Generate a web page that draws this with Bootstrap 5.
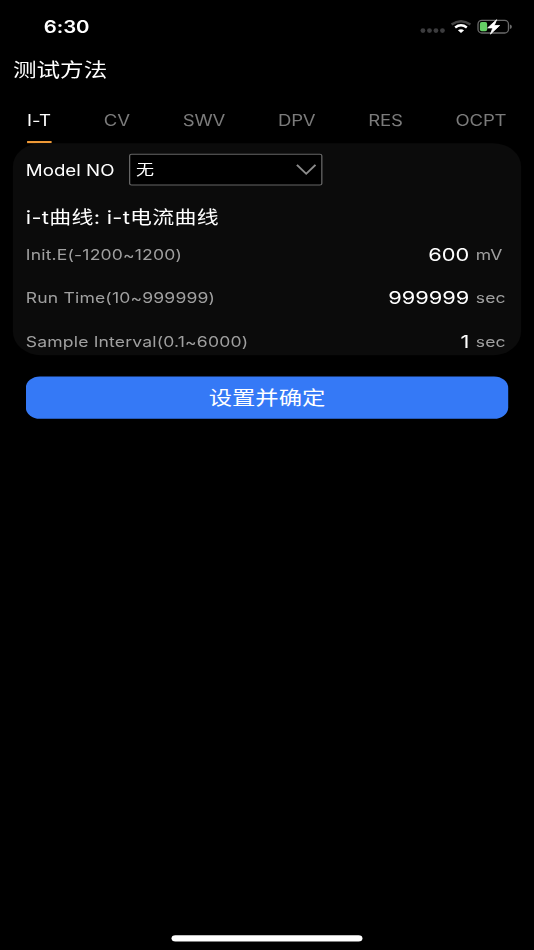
<!DOCTYPE html>
<html lang="zh-CN">
<head>
<meta charset="utf-8">
<meta name="viewport" content="width=device-width, initial-scale=1">
<title>测试方法</title>
<link href="https://cdn.jsdelivr.net/npm/bootstrap@5.3.0/dist/css/bootstrap.min.css" rel="stylesheet">
<style>
html,body{background:#000;overflow:hidden}
body{width:534px;height:950px;font-family:Inter,"Noto Sans CJK SC",sans-serif;line-height:1;color:#fff}
/* 414x896 phone canvas stretched to fill the window */
.screen{width:414px;height:896px;transform:scale(1.28986,1.06027);transform-origin:0 0}
.status{height:50px;padding:0 17px 0 34px}
.clock{font-size:15.8px;letter-spacing:-.1px;padding-top:1px}
.title{height:34px;padding-left:10px;font-size:18.3px;font-weight:400}
.tabs{height:51px;padding:0 21.4px 0 21px;font-size:14.4px}
.tabs .nav-link{padding:2px 0 0;height:41px;color:#7b7b7b;border-bottom:2.4px solid transparent;display:flex;align-items:center;border-radius:0;letter-spacing:-.14px}
.tabs .nav-link.active{color:#fff;border-color:#f09a37;letter-spacing:-.05px}
.panel{margin:0 10px;height:200px;background:#0b0b0b;border-radius:22px;overflow:hidden;padding:10px 10px 0}
.model{height:30px;font-size:14.5px}
.model label{width:80px;padding-top:2px}
.picker{width:150px;height:30px;background:#000;border:1px solid #666;border-radius:2px;padding:0 4px 0 4.4px;font-size:14px}
.heading{height:22px;margin:19px 0 0;font-size:17px;font-weight:400;letter-spacing:.22px}
.field{height:41px;font-size:13.6px;letter-spacing:.14px;color:#a0a0a0;padding-top:2px}
.heading + .field{margin-top:3.5px}
.num{font-size:16.9px;letter-spacing:0;color:#fff;margin-top:-1px}
.unit{width:25.2px;margin-left:5px;white-space:nowrap}
.confirm{height:40px;margin:20px 20px 0;background:#3579f6;color:#fff;border:0;border-radius:11px;font-size:18.1px;line-height:1;padding:1px 0 0}
.home{width:148px;height:5.8px;background:#fff;margin-bottom:7.8px}
</style>
</head>
<body>
<main class="screen d-flex flex-column">
  <div class="status d-flex align-items-center justify-content-between">
    <span class="clock fw-semibold">6:30</span>
    <svg width="73" height="20" viewBox="0 0 94 21.2" preserveAspectRatio="none">
      <g fill="#3c3c3e"><circle cx="5" cy="14.7" r="2.4"/><circle cx="11.5" cy="14.7" r="2.4"/><circle cx="18" cy="14.7" r="2.4"/><circle cx="24.5" cy="14.7" r="2.4"/></g>
      <g fill="none" stroke-width="2.5"><path stroke="#444" d="M33.6 8.7Q43 1.9 52.4 8.7"/><path stroke="#fff" d="M37.2 11.6Q43 7.2 48.8 11.6"/></g>
      <path fill="#fff" d="M39.9 14.3Q43 12.2 46.1 14.3L43 17z"/>
      <rect x="60" y="4.5" width="30.4" height="12.6" rx="3.8" fill="none" stroke="#6b6b6b" stroke-width="1.3"/>
      <path fill="#6b6b6b" d="M91.8 8.6q2 .5 2 2.2t-2 2.2z"/>
      <rect x="61.9" y="6.2" width="7.2" height="9.2" rx="1.8" fill="#65d065"/>
      <path d="M78.6 3.8L69.6 12H74.8L72.4 18.2L81.6 9.6H76.2z" fill="#fff" stroke="#fff" stroke-width=".8" stroke-linejoin="round"/>
    </svg>
  </div>
  <h1 class="title d-flex align-items-center m-0">测试方法</h1>
  <nav class="tabs nav flex-nowrap justify-content-between align-items-end">
    <a class="nav-link active" href="#">I-T</a>
    <a class="nav-link" href="#">CV</a>
    <a class="nav-link" href="#">SWV</a>
    <a class="nav-link" href="#">DPV</a>
    <a class="nav-link" href="#">RES</a>
    <a class="nav-link" href="#">OCPT</a>
  </nav>
  <section class="panel">
    <div class="model d-flex align-items-center">
      <label>Model NO</label>
      <div class="picker d-flex align-items-center justify-content-between">
        <span>无</span>
        <svg width="16" height="12" viewBox="0 0 16 12"><path d="M1.2 1.5L8.4 10L15.6 1.5" fill="none" stroke="#8c8c8c" stroke-width="1.5"/></svg>
      </div>
    </div>
    <h2 class="heading d-flex align-items-center">i-t曲线: i-t电流曲线</h2>
    <div class="field d-flex align-items-center"><span class="me-auto">Init.E(-1200~1200)</span><span class="num">600</span><span class="unit">mV</span></div>
    <div class="field d-flex align-items-center"><span class="me-auto">Run Time(10~999999)</span><span class="num">999999</span><span class="unit">sec</span></div>
    <div class="field d-flex align-items-center"><span class="me-auto">Sample Interval(0.1~6000)</span><span class="num">1</span><span class="unit">sec</span></div>
  </section>
  <button class="confirm btn" type="button">设置并确定</button>
  <div class="home rounded-pill mt-auto mx-auto"></div>
</main>
<script src="https://cdn.jsdelivr.net/npm/bootstrap@5.3.0/dist/js/bootstrap.bundle.min.js"></script>
</body>
</html>
